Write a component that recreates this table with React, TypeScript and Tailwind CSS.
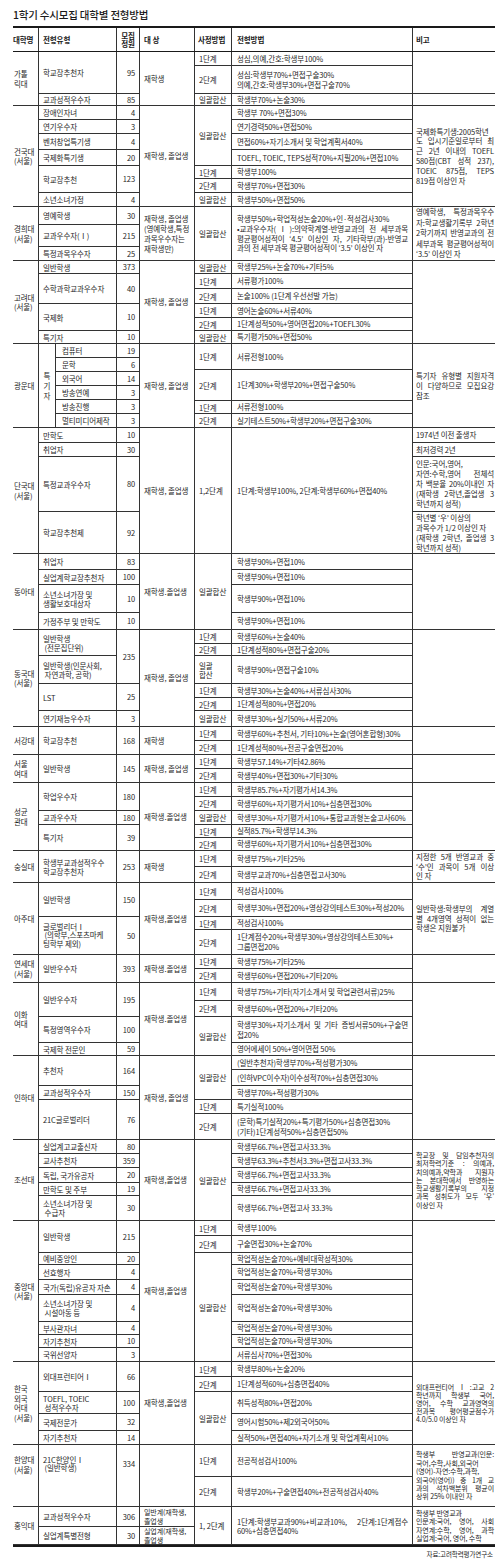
import React from 'react';
import clsx from 'clsx';

type Cell = { t: string; h: number; lh?: number; j?: boolean; small?: boolean };
type LeftRow = { label?: string; num: string; h: number; lh?: number; subs?: Cell[] };
type Method = { type: string; rows: Cell[] };
type Group = {
  name: string;
  top?: boolean;
  vlabel?: string;
  left: LeftRow[];
  target: Cell[];
  methods: Method[];
  note: Cell[];
};

const c = (t: string, h: number, lh?: number, j?: boolean, small?: boolean): Cell => ({ t, h, lh, j, small });
const sum = (cells: { h: number }[]) => cells.reduce((s, x) => s + x.h, 0);

const GROUPS: Group[] = [
  {
    name: '가톨\n릭대',
    left: [
      { label: '학교장추천자', num: '95', h: 42 },
      { label: '교과성적우수자', num: '85', h: 12 },
    ],
    target: [c('재학생', 54)],
    methods: [
      { type: '1단계', rows: [c('성심,의예,간호:학생부100%', 14)] },
      { type: '2단계', rows: [c('성심:학생부70%+면접구술30%\n의예,간호:학생부30%+면접구술70%', 28)] },
      { type: '일괄합산', rows: [c('학생부70%+논술30%', 12)] },
    ],
    note: [c('', 42), c('', 12)],
  },
  {
    name: '건국대\n(서울)',
    left: [
      { label: '장애인자녀', num: '4', h: 14 },
      { label: '연기우수자', num: '3', h: 14 },
      { label: '벤처창업특기생', num: '4', h: 16 },
      { label: '국제화특기생', num: '20', h: 16 },
      { label: '학교장추천', num: '123', h: 27 },
      { label: '소년소녀가정', num: '4', h: 14 },
    ],
    target: [c('재학생, 졸업생', 101)],
    methods: [
      {
        type: '일괄합산',
        rows: [
          c('학생부 70%+면접30%', 14),
          c('연기경력50%+면접50%', 14),
          c('면접60%+자기소개서 및 학업계획서40%', 16),
          c('TOEFL, TOEIC, TEPS성적70%+지필20%+면접10%', 16),
        ],
      },
      { type: '1단계', rows: [c('학생부100%', 13)] },
      { type: '2단계', rows: [c('학생부70%+면접30%', 14)] },
      { type: '일괄합산', rows: [c('학생부50%+면접50%', 14)] },
    ],
    note: [
      c('국제화특기생:2005학년\n도 입시기준일로부터 최\n근 2년 이내의 TOEFL\n580점(CBT 성적 237),\nTOEIC 875점, TEPS\n819점 이상인 자', 101, 9.8),
    ],
  },
  {
    name: '경희대\n(서울)',
    left: [
      { label: '영예학생', num: '30', h: 18 },
      { label: '교과우수자(Ⅰ)', num: '215', h: 22 },
      { label: '특정과목우수자', num: '25', h: 14 },
    ],
    target: [c('재학생, 졸업생\n(영예학생,특정\n과목우수자는\n재학생만)', 54)],
    methods: [
      {
        type: '일괄합산',
        rows: [
          c(
            '^학생부50%+학업적성논술20%+인·적성검사30%\n•교과우수자(Ⅰ):의약학계열-반영교과의 전 세부과목\n평균평어성적이 ‘4.5’ 이상인 자, 기타학부(과)-반영교\n과의 전 세부과목 평균평어성적이 ‘3.5’ 이상인 자',
            54,
            9.6,
            true
          ),
        ],
      },
    ],
    note: [c('영예학생, 특정과목우수\n자:학교생활기록부 2학년\n2학기까지 반영교과의 전\n세부과목 평균평어성적이\n^‘3.5’ 이상인 자', 54, 10.5)],
  },
  {
    name: '고려대\n(서울)',
    left: [
      { label: '일반학생', num: '373', h: 13 },
      { label: '수학과학교과우수자', num: '40', h: 30 },
      { label: '국제화', num: '10', h: 27 },
      { label: '특기자', num: '10', h: 13 },
    ],
    target: [c('재학생, 졸업생', 83)],
    methods: [
      { type: '일괄합산', rows: [c('학생부25%+논술70%+기타5%', 13)] },
      { type: '1단계', rows: [c('서류평가100%', 15)] },
      { type: '2단계', rows: [c('논술100% (1단계 우선선발 가능)', 15)] },
      { type: '1단계', rows: [c('영어논술60%+서류40%', 14)] },
      { type: '2단계', rows: [c('1단계성적50%+영어면접20%+TOEFL30%', 13)] },
      { type: '일괄합산', rows: [c('특기평가50%+면접50%', 13)] },
    ],
    note: [c('', 83)],
  },
  {
    name: '광운대',
    vlabel: '특\n기\n자',
    left: [
      { label: '컴퓨터', num: '19', h: 14 },
      { label: '문학', num: '6', h: 14 },
      { label: '외국어', num: '14', h: 14 },
      { label: '방송연예', num: '3', h: 14 },
      { label: '방송진행', num: '3', h: 14 },
      { label: '멀티미디어제작', num: '3', h: 14 },
    ],
    target: [c('재학생, 졸업생', 84)],
    methods: [
      { type: '1단계', rows: [c('서류전형100%', 26)] },
      { type: '2단계', rows: [c('1단계30%+학생부20%+면접구술50%', 31)] },
      { type: '1단계', rows: [c('서류전형100%', 13)] },
      { type: '2단계', rows: [c('실기테스트50%+학생부20%+면접구술30%', 14)] },
    ],
    note: [c('특기자 유형별 지원자격\n이 다양하므로 모집요강\n참조', 84)],
  },
  {
    name: '단국대\n(서울)',
    left: [
      { label: '만학도', num: '10', h: 15 },
      { label: '취업자', num: '30', h: 14 },
      { label: '특정교과우수자', num: '80', h: 55 },
      { label: '학교장추천제', num: '92', h: 42 },
    ],
    target: [c('재학생, 졸업생', 126)],
    methods: [{ type: '1,2단계', rows: [c('1단계:학생부100%, 2단계:학생부60%+면접40%', 126)] }],
    note: [
      c('1974년 이전 출생자', 15),
      c('최저경력 2년', 14),
      c('^인문:국어,영어,\n자연:수학,영어  전체석\n차 백분율 20%이내인 자\n(재학생 2학년,졸업생 3\n학년까지 성적)', 55, 10),
      c('^학년별 ‘우’ 이상의\n^과목수가 1/2 이상인 자\n(재학생 2학년, 졸업생 3\n학년까지 성적)', 42, 10),
    ],
  },
  {
    name: '동아대',
    left: [
      { label: '취업자', num: '83', h: 16 },
      { label: '실업계학교장추천자', num: '100', h: 15 },
      { label: '소년소녀가장 및\n생활보호대상자', num: '10', h: 28 },
      { label: '가정주부 및 만학도', num: '10', h: 17 },
    ],
    target: [c('재학생.졸업생', 76)],
    methods: [
      {
        type: '일괄합산',
        rows: [
          c('학생부90%+면접10%', 16),
          c('학생부90%+면접10%', 15),
          c('학생부90%+면접10%', 28),
          c('학생부90%+면접10%', 17),
        ],
      },
    ],
    note: [c('', 76)],
  },
  {
    name: '동국대\n(서울)',
    left: [
      {
        num: '235',
        h: 54,
        subs: [c('일반학생\n\u00a0(전문집단위)', 26), c('일반학생(인문사회,\n\u00a0자연과학, 공학)', 28)],
      },
      { label: 'LST', num: '25', h: 27 },
      { label: '연기재능우수자', num: '3', h: 16 },
    ],
    target: [c('재학생, 졸업생', 97)],
    methods: [
      { type: '1단계', rows: [c('학생부60%+논술40%', 14)] },
      { type: '2단계', rows: [c('1단계성적80%+면접구술20%', 12)] },
      { type: '일괄\n합산', rows: [c('학생부90%+면접구술10%', 28)] },
      { type: '1단계', rows: [c('학생부30%+논술40%+서류심사30%', 14)] },
      { type: '2단계', rows: [c('1단계성적80%+면접20%', 13)] },
      { type: '일괄합산', rows: [c('학생부30%+실기50%+서류20%', 16)] },
    ],
    note: [c('', 97)],
  },
  {
    name: '서강대',
    left: [{ label: '학교장추천', num: '168', h: 28 }],
    target: [c('재학생', 28)],
    methods: [
      { type: '1단계', rows: [c('학생부60%+추천서, 기타10%+논술(영어혼합형)30%', 14)] },
      { type: '2단계', rows: [c('1단계성적80%+전공구술면접20%', 14)] },
    ],
    note: [c('', 28)],
  },
  {
    name: '서울\n여대',
    left: [{ label: '일반학생', num: '145', h: 28 }],
    target: [c('재학생, 졸업생', 28)],
    methods: [
      { type: '1단계', rows: [c('학생부57.14%+기타42.86%', 14)] },
      { type: '2단계', rows: [c('학생부40%+면접30%+기타30%', 14)] },
    ],
    note: [c('', 28)],
  },
  {
    name: '성균\n관대',
    left: [
      { label: '학업우수자', num: '180', h: 28 },
      { label: '교과우수자', num: '180', h: 14 },
      { label: '특기자', num: '39', h: 26 },
    ],
    target: [c('재학생.졸업생', 68)],
    methods: [
      { type: '1단계', rows: [c('학생부85.7%+자기평가서14.3%', 14)] },
      { type: '2단계', rows: [c('학생부60%+자기평가서10%+심층면접30%', 14)] },
      { type: '일괄합산', rows: [c('학생부30%+자기평가서10%+통합교과형논술고사60%', 14)] },
      { type: '1단계', rows: [c('실적85.7%+학생부14.3%', 13)] },
      { type: '2단계', rows: [c('학생부60%+자기평가서10%+심층면접30%', 13)] },
    ],
    note: [c('', 68)],
  },
  {
    name: '숭실대',
    left: [{ label: '학생부교과성적우수\n학교장추천자', num: '253', h: 32 }],
    target: [c('재학생', 32)],
    methods: [
      { type: '1단계', rows: [c('학생부75%+기타25%', 16)] },
      { type: '2단계', rows: [c('학생부교과70%+심층면접고사30%', 16)] },
    ],
    note: [c('지정한 5개 반영교과 중\n‘수’인 과목이 5개 이상\n인 자', 32, 9.5)],
  },
  {
    name: '아주대',
    left: [
      { label: '일반학생', num: '150', h: 34 },
      { label: '글로벌리더Ⅰ\n\u00a0(의학부,스포츠마케\n팅학부 제외)', num: '50', h: 38, lh: 8.5 },
    ],
    target: [c('재학생,졸업생', 72)],
    methods: [
      { type: '1단계', rows: [c('적성검사100%', 17)] },
      { type: '2단계', rows: [c('학생부30%+면접20%+영상강의테스트30%+적성20%', 17)] },
      { type: '1단계', rows: [c('적성검사100%', 13)] },
      { type: '2단계', rows: [c('1단계점수20%+학생부30%+영상강의테스트30%+\n그룹면접20%', 25)] },
    ],
    note: [c('일반학생:학생부의 계열\n별 4개영역 성적이 없는\n학생은 지원불가', 72, 9.5)],
  },
  {
    name: '연세대\n(서울)',
    left: [{ label: '일반우수자', num: '393', h: 28 }],
    target: [c('재학생.졸업생', 28)],
    methods: [
      { type: '1단계', rows: [c('학생부75%+기타25%', 14)] },
      { type: '2단계', rows: [c('학생부60%+면접20%+기타20%', 14)] },
    ],
    note: [c('', 28)],
  },
  {
    name: '이화\n여대',
    left: [
      { label: '일반우수자', num: '195', h: 34 },
      { label: '특정영역우수자', num: '100', h: 26 },
      { label: '국제학 전문인', num: '59', h: 13 },
    ],
    target: [c('재학생.졸업생', 73)],
    methods: [
      { type: '1단계', rows: [c('학생부75%+기타(자기소개서 및 학업관련서류)25%', 18)] },
      { type: '2단계', rows: [c('학생부60%+면접20%+기타20%', 16)] },
      {
        type: '일괄합산',
        rows: [
          c('학생부30%+자기소개서 및 기타 증빙서류50%+구술면\n접20%', 26, 9.5, true),
          c('영어에세이 50%+영어면접 50%', 13),
        ],
      },
    ],
    note: [c('', 73)],
  },
  {
    name: '인하대',
    left: [
      { label: '추천자', num: '164', h: 30 },
      { label: '교과성적우수자', num: '150', h: 14 },
      { label: '21C글로벌리더', num: '76', h: 40 },
    ],
    target: [c('재학생, 졸업생', 84)],
    methods: [
      {
        type: '일괄합산',
        rows: [
          c('(일반추천자)학생부70%+적성평가30%', 14),
          c('(인하VPC이수자)이수성적70%+심층면접30%', 16),
          c('학생부70%+적성평가30%', 14),
        ],
      },
      { type: '1단계', rows: [c('특기실적100%', 14)] },
      { type: '2단계', rows: [c('(문학)특기실적20%+특기평가50%+심층면접30%\n(기타)1단계성적50%+심층면접50%', 26, 9.5)] },
    ],
    note: [c('', 84)],
  },
  {
    name: '조선대',
    left: [
      { label: '실업계고교출신자', num: '80', h: 14 },
      { label: '교사추천자', num: '359', h: 14 },
      { label: '독립, 국가유공자', num: '20', h: 15 },
      { label: '만학도 및 주부', num: '19', h: 13 },
      { label: '소년소녀가장 및\n\u00a0수급자', num: '30', h: 25 },
    ],
    target: [c('재학생,졸업생', 81)],
    methods: [
      {
        type: '일괄합산',
        rows: [
          c('학생부66.7%+면접고사33.3%', 14),
          c('학생부63.3%+추천서3.3%+면접고사33.3%', 14),
          c('학생부66.7%+면접고사33.3%', 15),
          c('학생부66.7%+면접고사33.3%', 13),
          c('학생부66.7%+면접고사 33.3%', 25),
        ],
      },
    ],
    note: [
      c('학교장 및 담임추천자의\n최저학력기준 : 의예과,\n치의예과,약학과 지원자\n는 본대학에서 반영하는\n학교생활기록부의 지정\n과목 성취도가 모두 ‘우’\n이상인 자', 81, 8.2, false, true),
    ],
  },
  {
    name: '중앙대\n(서울)',
    left: [
      { label: '일반학생', num: '215', h: 32 },
      { label: '예비중앙인', num: '20', h: 12 },
      { label: '선효행자', num: '4', h: 15 },
      { label: '국가(독립)유공자 자손', num: '4', h: 15 },
      { label: '소년소녀가장 및\n\u00a0시설아동 등', num: '4', h: 27 },
      { label: '부사관자녀', num: '4', h: 13 },
      { label: '자기추천자', num: '10', h: 13 },
      { label: '국위선양자', num: '3', h: 14 },
    ],
    target: [c('재학생,졸업생', 141)],
    methods: [
      { type: '1단계', rows: [c('학생부100%', 15)] },
      { type: '2단계', rows: [c('구술면접30%+논술70%', 17)] },
      {
        type: '일괄합산',
        rows: [
          c('학업적성논술70%+예비대학성적30%', 12),
          c('학업적성논술70%+학생부30%', 15),
          c('학업적성논술70%+학생부30%', 15),
          c('학업적성논술70%+학생부30%', 27),
          c('학업적성논술70%+학생부30%', 13),
          c('학업적성논술70%+학생부30%', 13),
          c('서류심사70%+면접30%', 14),
        ],
      },
    ],
    note: [c('', 141)],
  },
  {
    name: '한국\n외국\n어대\n(서울)',
    left: [
      { label: '외대프런티어Ⅰ', num: '66', h: 30 },
      { label: 'TOEFL, TOEIC\n\u00a0성적우수자', num: '100', h: 22 },
      { label: '국제전문가', num: '32', h: 17 },
      { label: '자기추천자', num: '14', h: 14 },
    ],
    target: [c('재학생,졸업생', 83)],
    methods: [
      { type: '1단계', rows: [c('학생부80%+논술20%', 15)] },
      { type: '2단계', rows: [c('1단계성적60%+심층면접40%', 15)] },
      {
        type: '일괄합산',
        rows: [
          c('취득성적80%+면접20%', 22),
          c('영어시험50%+제2외국어50%', 17),
          c('실적50%+면접40%+자기소개 및 학업계획서10%', 14),
        ],
      },
    ],
    note: [c('외대프런티어Ⅰ:고교 2\n학년까지 학생부 국어,\n영어, 수학 교과영역의\n전과목 평어평균점수가\n^4.0/5.0 이상인 자', 83, 8, false, true)],
  },
  {
    name: '한양대\n(서울)',
    top: true,
    left: [{ label: '21C한양인Ⅰ\n\u00a0(일반학생)', num: '334', h: 62, lh: 8 }],
    target: [c('', 62)],
    methods: [
      { type: '1단계', rows: [c('전공적성검사100%', 32)] },
      { type: '2단계', rows: [c('학생부20%+구술면접40%+전공적성검사40%', 30)] },
    ],
    note: [
      c('학생부 반영교과(인문:\n국어,수학,사회,외국어\n(영어)-자연:수학,과학,\n외국어(영어)) 중 1개 교\n과의 석차백분위 평균이\n^상위 25% 이내인 자', 62, 8.4, false, true),
    ],
  },
  {
    name: '홍익대',
    left: [
      { label: '교과성적우수자', num: '306', h: 20 },
      { label: '실업계특별전형', num: '30', h: 18 },
    ],
    target: [c('일반계(재학생,\n졸업생', 20, 8.5, false, true), c('실업계(재학생,\n졸업생', 18, 8.5, false, true)],
    methods: [
      {
        type: '1, 2단계',
        rows: [c('1단계:학생부교과90%+비교과10%, 2단계:1단계점수\n60%+심층면접40%', 38, 9, true)],
      },
    ],
    note: [c('^학생부 반영교과\n인문계:국어, 영어, 사회\n자연계:수학, 영어, 과학\n실업계:국어, 영어, 수학', 38, 8.2, false, true)],
  },
];

function Lines({ text, lh = 10, justify = false, center = false }: { text: string; lh?: number; justify?: boolean; center?: boolean }) {
  const lines = text.split('\n');
  return (
    <div className={clsx('w-full', center && 'text-center')}>
      {lines.map((ln, i) => {
        const nj = ln.startsWith('^');
        const s = nj ? ln.slice(1) : ln;
        const j = justify && !nj && i < lines.length - 1;
        return (
          <div key={i} className={clsx('whitespace-nowrap', j && '[text-align-last:justify] text-justify')} style={{ lineHeight: `${lh}px` }}>
            {s}
          </div>
        );
      })}
    </div>
  );
}

function Box({ h, className, start, children }: { h: number; className?: string; start?: boolean; children?: React.ReactNode }) {
  return (
    <div
      className={clsx('border-b border-[#333] flex overflow-visible', start ? 'items-start' : 'items-center', className)}
      style={{ height: h }}
    >
      {children}
    </div>
  );
}

function LeftView({ g }: { g: Group }) {
  if (g.vlabel) {
    return (
      <div className="w-[101px] shrink-0 flex">
        <div className="w-[17px] shrink-0 border-l border-b border-[#333] flex items-center justify-center">
          <Lines text={g.vlabel} lh={10} center />
        </div>
        <div className="flex-1 flex flex-col">
          {g.left.map((r, i) => (
            <div key={i} className="flex" style={{ height: r.h }}>
              <Box h={r.h} className="w-[61px] shrink-0 border-l pl-[6px]">
                {r.label}
              </Box>
              <Box h={r.h} className="flex-1 border-l justify-end pr-[4px]">
                {r.num}
              </Box>
            </div>
          ))}
        </div>
      </div>
    );
  }
  return (
    <div className="w-[101px] shrink-0 flex flex-col">
      {g.left.map((r, i) => (
        <div key={i} className="flex" style={{ height: r.h }}>
          {r.subs ? (
            <div className="w-[78px] shrink-0 flex flex-col">
              {r.subs.map((s, k) => (
                <Box key={k} h={s.h} className="border-l pl-[4px]">
                  <Lines text={s.t} lh={s.lh ?? 9} />
                </Box>
              ))}
            </div>
          ) : (
            <Box h={r.h} start={g.top} className={clsx('w-[78px] shrink-0 border-l pl-[4px]', g.top && 'pt-[11px]')}>
              <Lines text={r.label ?? ''} lh={r.lh ?? 9} />
            </Box>
          )}
          <Box h={r.h} start={g.top} className={clsx('flex-1 border-l justify-end pr-[4px]', g.top && 'pt-[14px]')}>
            {r.num}
          </Box>
        </div>
      ))}
    </div>
  );
}

function GroupView({ g }: { g: Group }) {
  const total = sum(g.target);
  return (
    <div className="flex" style={{ height: total }}>
      <div className={clsx('w-[25px] shrink-0 border-b border-[#333] flex pl-[1px]', g.top ? 'items-start pt-[10px]' : 'items-center')}>
        <Lines text={g.name} lh={9.5} />
      </div>
      <LeftView g={g} />
      <div className="w-[55px] shrink-0 flex flex-col">
        {g.target.map((t, i) => (
          <Box key={i} h={t.h} className={clsx('border-l pl-[4px]', t.small && 'text-[7px]')}>
            <Lines text={t.t} lh={t.lh ?? 10} />
          </Box>
        ))}
      </div>
      <div className="w-[218px] shrink-0 flex flex-col">
        {g.methods.map((m, i) => (
          <div key={i} className="flex" style={{ height: sum(m.rows) }}>
            <Box h={sum(m.rows)} className="w-[37px] shrink-0 border-l pl-[4px]">
              <Lines text={m.type} lh={9} />
            </Box>
            <div className="w-[181px] shrink-0 flex flex-col">
              {m.rows.map((r, k) => (
                <Box key={k} h={r.h} className="border-l pl-[5px] pr-[4px]">
                  <Lines text={r.t} lh={r.lh ?? 10} justify={r.j} />
                </Box>
              ))}
            </div>
          </div>
        ))}
      </div>
      <div className="flex-1 flex flex-col">
        {g.note.map((n, i) => (
          <Box key={i} h={n.h} className={clsx('border-l pl-[3px] pr-[1px]', n.small && 'text-[7px]')}>
            <Lines text={n.t} lh={n.lh ?? 10} justify />
          </Box>
        ))}
      </div>
    </div>
  );
}

export default function App() {
  return (
    <div className="w-[500px] h-[1560px] bg-white text-[#262626] font-['Noto_Sans_CJK_KR','Noto_Sans',sans-serif] text-[7.5px] leading-[10px] tracking-[-0.1px]">
      <div className="ml-[13px] w-[482px]">
        <div className="h-[26px] pt-[8px] text-[10.5px] leading-[14px] font-medium tracking-[-0.2px] text-[#1a1a1a]">
          1학기 수시모집 대학별 전형방법
        </div>
        <div className="flex h-[26px] border-t-2 border-b border-[#1a1a1a] font-bold text-[#1a1a1a]">
          <div className="w-[25px] shrink-0 flex items-center">대학명</div>
          <div className="w-[78px] shrink-0 border-l border-[#333] flex items-center pl-[4px]">전형유형</div>
          <div className="w-[23px] shrink-0 border-l border-[#333] flex items-center">
            <Lines text={'모집\n정원'} lh={8} center />
          </div>
          <div className="w-[55px] shrink-0 border-l border-[#333] flex items-center pl-[4px]">대 상</div>
          <div className="w-[37px] shrink-0 border-l border-[#333] flex items-center pl-[3px]">사정방법</div>
          <div className="w-[181px] shrink-0 border-l border-[#333] flex items-center pl-[5px]">전형방법</div>
          <div className="flex-1 border-l border-[#333] flex items-center pl-[3px]">비고</div>
        </div>
        <div className="border-b-2 border-[#1a1a1a]">
          {GROUPS.map((g, i) => (
            <GroupView key={i} g={g} />
          ))}
        </div>
        <div className="mt-[3px] text-right pr-[2px] text-[6.5px] leading-[9px]">자료:고려학력평가연구소</div>
      </div>
    </div>
  );
}
